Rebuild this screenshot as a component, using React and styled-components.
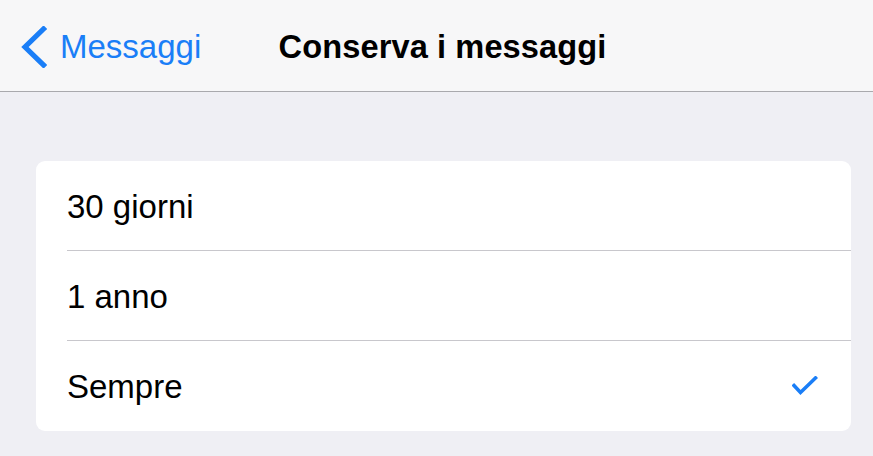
import React from "react";
import styled, { createGlobalStyle } from "styled-components";

const Global = createGlobalStyle`
  html, body { margin: 0; padding: 0; }
  body {
    background: #efeff4;
    font-family: "Liberation Sans", Arial, sans-serif;
    -webkit-font-smoothing: antialiased;
  }
`;

const Page = styled.div`
  width: 873px;
  height: 456px;
  background: #efeff4;
  display: flex;
  flex-direction: column;
  overflow: hidden;
`;

const NavBar = styled.header`
  height: 91px;
  flex: none;
  background: #f7f7f8;
  border-bottom: 1px solid #a9a9ad;
  display: grid;
  grid-template-columns: 1fr auto 1fr;
  align-items: center;
  padding: 0 20px;
  box-sizing: content-box;
`;

const BackButton = styled.div`
  display: flex;
  align-items: center;
  gap: 13px;
  color: #1a7ef7;
  font-size: 33px;
  justify-self: start;
  margin-top: 2px;
`;

const Title = styled.h1`
  margin: 0;
  font-size: 32.6px;
  font-weight: 700;
  color: #000;
  letter-spacing: 0.1px;
  margin-left: 12px;
  margin-top: 2px;
`;

const Content = styled.main`
  padding: 69px 22px 0 36px;
`;

const Card = styled.section`
  background: #fff;
  border-radius: 9px;
  overflow: hidden;
`;

const Row = styled.div`
  height: 90px;
  display: flex;
  align-items: center;
  justify-content: space-between;
  margin-left: 31px;
  padding-right: 33px;
  border-bottom: ${(p) => (p.$last ? "none" : "1px solid #c8c7cc")};
  box-sizing: border-box;
  font-size: 33px;
  color: #000;
`;

const Label = styled.span`
  margin-top: 2px;
`;

const Chevron = () => (
  <svg width="27" height="42" viewBox="0 0 27 42" aria-hidden="true">
    <path d="M23.5 3 L5 21 L23.5 39" fill="none" stroke="#1a7ef7" strokeWidth="5.2" strokeLinecap="square" strokeLinejoin="miter" />
  </svg>
);

const Check = () => (
  <svg width="26" height="20" viewBox="0 0 26 20" aria-hidden="true">
    <path d="M2 9.5 L8.5 16.5 L23.5 2" fill="none" stroke="#1a7ef7" strokeWidth="3.6" strokeLinecap="square" />
  </svg>
);

const options = [
  { label: "30 giorni", selected: false },
  { label: "1 anno", selected: false },
  { label: "Sempre", selected: true },
];

export default function App() {
  return (
    <Page>
      <Global />
      <NavBar>
        <BackButton>
          <Chevron />
          <span>Messaggi</span>
        </BackButton>
        <Title>Conserva i messaggi</Title>
        <div />
      </NavBar>
      <Content>
        <Card>
          {options.map((o, i) => (
            <Row key={o.label} $last={i === options.length - 1}>
              <Label>{o.label}</Label>
              {o.selected && <Check />}
            </Row>
          ))}
        </Card>
      </Content>
    </Page>
  );
}
